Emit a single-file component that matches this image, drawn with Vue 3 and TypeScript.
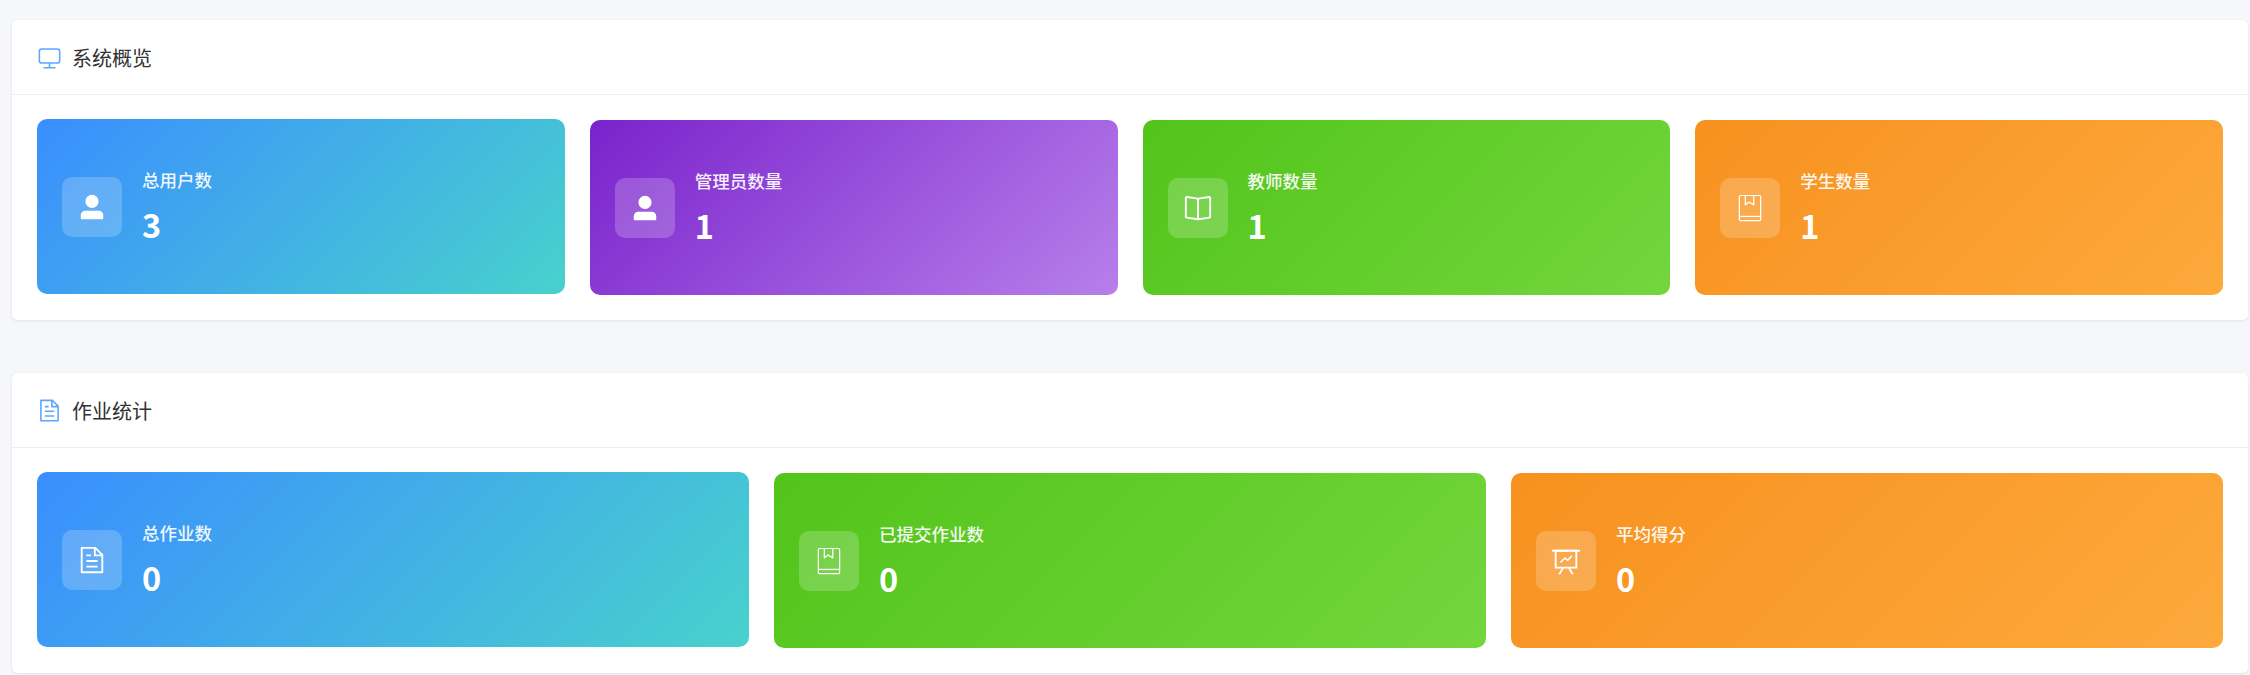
<template>
  <div class="page">
    <section v-for="group in groups" :key="group.title" class="panel">
      <header class="panel-head">
        <svg class="head-icon" viewBox="0 0 1024 1024" aria-hidden="true">
          <path v-for="d in icons[group.icon]" :key="d" :d="d" fill="currentColor" />
        </svg>
        <span>{{ group.title }}</span>
      </header>
      <div class="panel-body" :class="`cols-${group.stats.length}`">
        <div
          v-for="(stat, i) in group.stats"
          :key="stat.label"
          class="stat"
          :class="[stat.tone, { lifted: i === 0 }]"
        >
          <div class="stat-icon">
            <svg v-if="stat.icon === 'book'" viewBox="0 0 1024 1024" aria-hidden="true">
              <g fill="none" stroke="currentColor" stroke-width="42" stroke-linejoin="round">
                <rect x="149" y="85" width="726" height="854" rx="36" />
                <path d="M149 800h726" />
                <path d="M352 85v320l128-96 160 96V85" />
              </g>
            </svg>
            <svg v-else viewBox="0 0 1024 1024" aria-hidden="true">
              <path v-for="d in icons[stat.icon]" :key="d" :d="d" fill="currentColor" />
              <path
                v-if="stat.icon === 'board'"
                d="M340 540l140-130 90 80 130-140"
                fill="none"
                stroke="currentColor"
                stroke-width="56"
                stroke-linecap="round"
                stroke-linejoin="round"
              />
            </svg>
          </div>
          <div class="stat-text">
            <div class="stat-label">{{ stat.label }}</div>
            <div class="stat-value">{{ stat.value }}</div>
          </div>
        </div>
      </div>
    </section>
  </div>
</template>

<script setup lang="ts">
type IconName = "monitor" | "user" | "reading" | "book" | "document" | "board";

interface Stat {
  label: string;
  value: number;
  tone: "blue" | "purple" | "green" | "orange";
  icon: IconName;
}

// element-plus style outlines, 1024 grid
const icons: Record<IconName, string[]> = {
  monitor: [
    "M544 768v128h192a32 32 0 1 1 0 64H288a32 32 0 1 1 0-64h192V768H192A128 128 0 0 1 64 640V256a128 128 0 0 1 128-128h640a128 128 0 0 1 128 128v384a128 128 0 0 1-128 128H544zM192 192a64 64 0 0 0-64 64v384a64 64 0 0 0 64 64h640a64 64 0 0 0 64-64V256a64 64 0 0 0-64-64H192z"
  ],
  user: [
    "M288 320a224 224 0 1 0 448 0 224 224 0 1 0-448 0zm544 608H160a32 32 0 0 1-32-32v-96a160 160 0 0 1 160-160h448a160 160 0 0 1 160 160v96a32 32 0 0 1-32 32z"
  ],
  reading: [
    "m512 863.36 384-54.848v-638.72L525.568 222.72a96 96 0 0 1-27.136 0L128 169.792v638.72l384 54.848zM137.024 106.432l370.432 52.928a32 32 0 0 0 9.088 0l370.432-52.928A64 64 0 0 1 960 169.792v638.72a64 64 0 0 1-54.976 63.36l-388.48 55.488a32 32 0 0 1-9.088 0l-388.48-55.488A64 64 0 0 1 64 808.512v-638.72a64 64 0 0 1 73.024-63.36z",
    "M480 192h64v704h-64z"
  ],
  book: [],
  document: [
    "M832 384H576V128H192v768h640V384zm-26.496-64L640 154.496V320h165.504zM160 64h480l256 256v608a32 32 0 0 1-32 32H160a32 32 0 0 1-32-32V96a32 32 0 0 1 32-32zm160 448h384v64H320v-64zm0-192h160v64H320v-64zm0 384h384v64H320v-64z"
  ],
  board: [
    "M32 128h960v64H32z",
    "M192 192v512h640V192H192zm-64-64h768v640H128V128z",
    "M322.176 960H248.32l144.64-250.56 55.424 32L322.176 960zm453.888 0h-73.856L576 741.44l55.424-32L776.064 960z"
  ]
};

const groups: { title: string; icon: IconName; stats: Stat[] }[] = [
  {
    title: "系统概览",
    icon: "monitor",
    stats: [
      { label: "总用户数", value: 3, tone: "blue", icon: "user" },
      { label: "管理员数量", value: 1, tone: "purple", icon: "user" },
      { label: "教师数量", value: 1, tone: "green", icon: "reading" },
      { label: "学生数量", value: 1, tone: "orange", icon: "book" }
    ]
  },
  {
    title: "作业统计",
    icon: "document",
    stats: [
      { label: "总作业数", value: 0, tone: "blue", icon: "document" },
      { label: "已提交作业数", value: 0, tone: "green", icon: "book" },
      { label: "平均得分", value: 0, tone: "orange", icon: "board" }
    ]
  }
];
</script>

<style>
html,
body {
  margin: 0;
  background: #f5f7fa;
}
</style>

<style scoped>
.page {
  box-sizing: border-box;
  width: 2250px;
  height: 675px;
  overflow: hidden;
  padding: 20px 2px 0 12px;
  font-family: "Noto Sans CJK SC", "Noto Sans", sans-serif;
}

.panel {
  box-sizing: border-box;
  height: 300px;
  margin-bottom: 53px;
  background: #fff;
  border-radius: 5px;
  box-shadow: 0 1px 3px rgba(0, 0, 0, 0.08), 0 0 1px rgba(0, 0, 0, 0.1);
}

.panel-head {
  box-sizing: border-box;
  height: 75px;
  padding: 0 25px;
  display: flex;
  align-items: center;
  gap: 10px;
  border-bottom: 1px solid #ebeef5;
  font-size: 20px;
  color: #303133;
}

.head-icon {
  width: 25px;
  height: 25px;
  color: #5ba6ff;
}

.panel-body {
  display: grid;
  gap: 25px;
  padding: 25px;
}

.cols-4 {
  grid-template-columns: repeat(4, 1fr);
}

.cols-3 {
  grid-template-columns: repeat(3, 1fr);
}

.stat {
  box-sizing: border-box;
  height: 175px;
  padding: 0 25px;
  display: flex;
  align-items: center;
  gap: 20px;
  border-radius: 10px;
  color: #fff;
}

.lifted {
  transform: translateY(-1px);
}

.blue {
  background: linear-gradient(135deg, #3a8eff, #48d1cc);
}

.purple {
  background: linear-gradient(135deg, #7a22cc, #b77fea);
}

.green {
  background: linear-gradient(135deg, #52c41a, #73d63d);
}

.orange {
  background: linear-gradient(135deg, #f7911f, #fda93c);
}

.stat-icon {
  width: 60px;
  height: 60px;
  flex: none;
  display: flex;
  align-items: center;
  justify-content: center;
  background: rgba(255, 255, 255, 0.2);
  border-radius: 10px;
}

.stat-icon svg {
  width: 30px;
  height: 30px;
}

.stat-label {
  font-size: 17.5px;
  line-height: 24px;
  font-weight: 500;
  opacity: 0.92;
}

.stat-value {
  margin-top: 10px;
  font-size: 32.5px;
  line-height: 44px;
  font-weight: 700;
}
</style>
